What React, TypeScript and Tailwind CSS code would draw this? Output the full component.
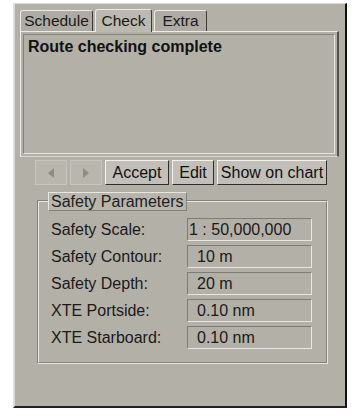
import React from "react";

const font = { fontFamily: '"Liberation Sans", Arial, sans-serif' };

const Tab = ({ label, w, active }: { label: string; w: string; active?: boolean }) => (
  <div
    className={`${w} flex items-center justify-center text-[15.5px] text-[#1a1a1a] rounded-t-[3px] border-l border-t border-r border-l-[#ecebe6] border-t-[#ecebe6] border-r-[#3c3b38] ${
      active ? "h-[23px] bg-[#bcb9b1] -mb-px z-10" : "h-[21px] bg-[#aeaba3]"
    }`}
  >
    {label}
  </div>
);

const Btn = ({ label, w }: { label: string; w: string }) => (
  <div
    className={`${w} h-[25px] flex items-center justify-center text-[16px] text-[#111] bg-[#c2bfb8] border border-t-[#f2f1ec] border-l-[#f2f1ec] border-r-[#2e2d2a] border-b-[#2e2d2a]`}
  >
    {label}
  </div>
);

const Arrow = ({ dir }: { dir: "l" | "r" }) => (
  <div className="w-[32px] h-[25px] flex items-center justify-center bg-[#b9b6ae] border border-[#c7c4bd]">
    <svg width="8" height="10" viewBox="0 0 8 10">
      {dir === "l" ? (
        <polygon points="7,0 7,10 1,5" fill="#8f8c85" />
      ) : (
        <polygon points="1,0 1,10 7,5" fill="#8f8c85" />
      )}
    </svg>
  </div>
);

const rows = [
  ["Safety Scale:", "1 : 50,000,000"],
  ["Safety Contour:", "10 m"],
  ["Safety Depth:", "20 m"],
  ["XTE Portside:", "0.10 nm"],
  ["XTE Starboard:", "0.10 nm"],
];

export default function App() {
  return (
    <div className="w-[355px] h-[420px] bg-white pt-[3px] pl-[13px]" style={font}>
      <div className="w-[334px] h-[405px] bg-[#b3b0a8] border-l-2 border-t border-l-[#dedcd6] border-t-[#dedcd6] border-r-2 border-b-2 border-r-[#111] border-b-[#222] pl-[5px] pt-[4px]">
        <div className="flex items-end gap-[2px] h-[23px]">
          <Tab label="Schedule" w="w-[73px]" />
          <Tab label="Check" w="w-[57px]" active />
          <Tab label="Extra" w="w-[53px]" />
        </div>
        <div className="w-[319px] h-[126px] border-t border-l border-t-[#ecebe6] border-l-[#ecebe6] border-r-2 border-b border-r-[#55534f] border-b-[#d8d6d0] p-[2px]">
          <div className="w-full h-full border border-t-[#85827c] border-l-[#85827c] border-r-[#e6e4df] border-b-[#e6e4df] pl-[4px] pt-[2px]">
            <div className="text-[16px] font-bold text-[#111] leading-[20px]">Route checking complete</div>
          </div>
        </div>
        <div className="flex gap-[3px] pl-[15px] mt-[3px]">
          <Arrow dir="l" />
          <Arrow dir="r" />
          <Btn label="Accept" w="w-[64px]" />
          <Btn label="Edit" w="w-[42px]" />
          <Btn label="Show on chart" w="w-[110px]" />
        </div>
        <div className="relative ml-[17px] mt-[15px] w-[291px] h-[164px] border border-t-[#85827c] border-l-[#85827c] border-r-[#e8e6e1] border-b-[#e8e6e1]">
          <div className="absolute inset-0 border border-t-[#e8e6e1] border-l-[#e8e6e1] border-r-[#85827c] border-b-[#85827c]" />
          <div className="absolute left-[10px] -top-[9px] h-[19px] px-[2px] flex items-center bg-[#b8b5ad] border border-t-[#e8e6e1] border-l-[#e8e6e1] border-r-[#85827c] border-b-[#85827c] text-[16px] text-[#222]">
            Safety Parameters
          </div>
          <div className="flex flex-col gap-[4px] pt-[17px] pl-[13px]">
            {rows.map(([l, v], i) => (
              <div key={l} className="flex items-center h-[23px]">
                <div className="w-[136px] text-[16px] text-[#1a1a1a]">{l}</div>
                <div
                  className={`w-[125px] h-[23px] flex items-center text-[16px] text-[#1a1a1a] border border-t-[#7f7c76] border-l-[#7f7c76] border-r-[#e8e6e1] border-b-[#e8e6e1] ${
                    i === 0 ? "pl-[1px]" : "pl-[9px]"
                  }`}
                >
                  {v}
                </div>
              </div>
            ))}
          </div>
        </div>
      </div>
    </div>
  );
}
